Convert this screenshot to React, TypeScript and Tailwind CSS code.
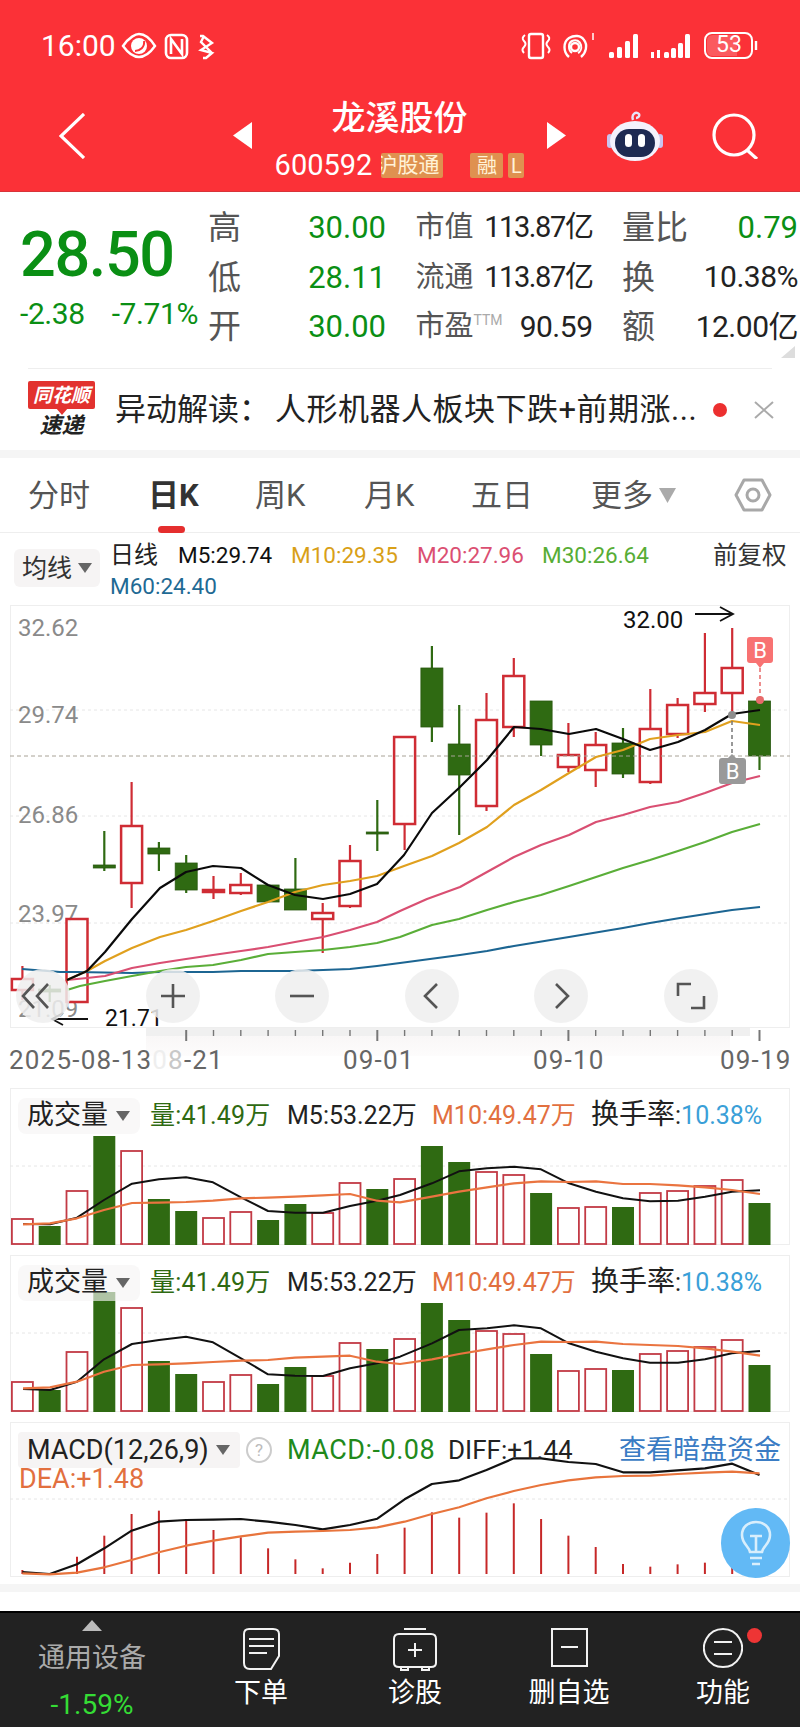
import React from "react";

const X = (i: number) => 22.4 + 27.3 * i;
const RED = "#cf2c34";
const GREEN = "#2f6a12";

type C = [string, number, number, number, number];
const candles: C[] = [
  ["r", 966, 979, 990, 1000],
  ["g", 985, 989, 992, 1002],
  ["r", 919, 919, 1002, 1002],
  ["g", 831, 865, 868, 871],
  ["r", 782, 826, 883, 908],
  ["g", 842, 848, 854, 871],
  ["g", 855, 863, 890, 893],
  ["r", 876, 890, 892, 899],
  ["r", 873, 885, 893, 895],
  ["g", 885, 885, 902, 902],
  ["g", 858, 889, 910, 910],
  ["r", 903, 913, 919, 953],
  ["r", 845, 861, 906, 908],
  ["g", 800, 832, 834, 851],
  ["r", 737, 737, 824, 850],
  ["g", 646, 668, 727, 742],
  ["g", 705, 744, 775, 835],
  ["r", 693, 720, 806, 811],
  ["r", 658, 676, 727, 737],
  ["g", 701, 701, 745, 756],
  ["r", 723, 755, 767, 772],
  ["r", 732, 745, 770, 787],
  ["g", 728, 743, 774, 778],
  ["r", 689, 729, 782, 784],
  ["r", 698, 705, 734, 738],
  ["r", 633, 693, 704, 712],
  ["r", 628, 668, 693, 715],
  ["g", 701, 701, 756, 770],
];

const pts = (a: number[][]) => a.map((p) => p.join(",")).join(" ");

const m5 = [[67,980],[87,971],[105,952],[132,919],[160,888],[186,872],[213,866],[241,868],[268,885],[295,895],[323,899],[350,894],[377,884],[404,855],[432,813],[459,788],[487,760],[514,727],[541,729],[569,734],[596,729],[623,739],[650,750],[678,742],[705,730],[732,714],[760,710]];
const m10 = [[67,980],[87,971],[105,961],[132,948],[160,937],[186,930],[213,921],[241,911],[268,902],[295,892],[323,885],[350,881],[377,876],[404,866],[432,856],[459,843],[487,827],[514,805],[541,790],[569,773],[596,757],[623,750],[650,739],[678,735],[705,732],[732,721],[760,725]];
const m20 = [[67,980],[87,978],[105,976],[132,968],[160,963],[186,959],[213,955],[241,951],[268,947],[295,942],[323,937],[350,930],[377,922],[400,911],[427,899],[460,887],[487,872],[514,857],[541,845],[569,835],[596,822],[623,815],[650,807],[678,802],[705,793],[732,783],[760,776]];
const m30 = [[67,990],[80,986],[105,981],[132,976],[160,971],[186,967],[213,965],[241,960],[268,954],[295,952],[323,950],[350,947],[377,943],[400,937],[432,925],[459,919],[487,910],[514,902],[541,895],[569,886],[596,877],[623,868],[650,860],[678,851],[705,842],[732,832],[760,824]];
const m60 = [[22,969],[60,972],[77,972],[132,973],[160,972],[213,972],[241,971],[295,971],[323,970],[350,969],[377,966],[400,963],[460,955],[487,951],[514,946],[569,937],[623,928],[650,923],[680,918],[732,910],[760,907]];

const vol1 = [1219,1226,1191,1136,1151,1199,1211,1218,1212,1220,1204,1213,1183,1189,1179,1146,1162,1172,1175,1193,1208,1207,1207,1193,1191,1186,1180,1203];
const vol2 = [1382,1390,1352,1292,1308,1361,1374,1382,1375,1384,1367,1376,1343,1349,1339,1303,1320,1331,1334,1354,1371,1369,1370,1354,1351,1347,1340,1365];
const isUp = [1,0,1,0,1,0,0,1,1,0,0,1,1,0,1,0,0,1,1,0,1,1,0,1,1,1,1,0];

const v = (a: number[][]) => a.map(([x, y]) => [x, +(1080 + y / 3).toFixed(1)]);
const xs1 = [23,50,77,104,132,159,186,213,241,268,295,323,350,377];
const xs2 = [400,432,459,487,514,541,569,596,623,650,678,705,732,760];
const zip = (y: number[]) => y.map((n, i) => [i < 14 ? xs1[i] : xs2[i - 14], n]);

const v1m5 = v(zip([432,433,413,360,311,298,292,307,352,393,398,398,378,362,345,310,274,265,260,268,310,335,355,364,362,350,335,331]));
const v1m10 = v(zip([433,430,415,390,369,368,366,362,355,353,350,346,342,362,367,350,335,322,310,304,306,304,312,312,316,322,330,342]));
const v2m5 = v(zip([927,930,905,838,792,780,770,787,835,883,887,888,865,850,830,790,750,745,736,745,790,815,835,848,848,838,820,813]));
const v2m10 = v(zip([925,922,905,875,855,853,850,846,842,840,833,830,827,845,852,838,822,808,795,785,786,785,792,795,798,805,815,827]));

const mTop = [450,460,410,347,282,272,303,330,352,385,418,445,428,402,323,277,293,278,250,297,347,381,432,440,433,428,415,460];
const mDiff = [456,462,433,385,332,305,300,299,297,305,315,328,315,296,238,192,181,150,115,115,126,132,157,157,151,145,131,165];
const mDea = [460,463,458,442,420,397,377,362,349,338,335,333,330,322,305,282,262,235,213,195,181,172,168,167,162,158,155,160];
const mp = (a: number[]) => a.map((n, i) => [X(i), +(1420 + n / 3).toFixed(1)]);

function Candles() {
  return (
    <g>
      {candles.map(([c, hi, t, b, lo], i) => {
        const x = X(i);
        const col = c === "r" ? RED : GREEN;
        return (
          <g key={i}>
            <line x1={x} x2={x} y1={hi} y2={t} stroke={col} strokeWidth={2.2} />
            <line x1={x} x2={x} y1={b} y2={lo} stroke={col} strokeWidth={2.2} />
            {c === "r" ? (
              <rect x={x - 10.5} y={t} width={21} height={b - t} fill="#fff" fillOpacity={0.9} stroke={col} strokeWidth={2.5} />
            ) : (
              <rect x={x - 11} y={t} width={22} height={b - t} fill={col} stroke="#28590f" strokeWidth={0.8} />
            )}
          </g>
        );
      })}
    </g>
  );
}

function Line({ p, c, w = 2.2 }: { p: number[][]; c: string; w?: number }) {
  return <polyline points={pts(p)} fill="none" stroke={c} strokeWidth={w} strokeLinejoin="round" />;
}

function Dotted({ y }: { y: number }) {
  return <line x1={10} x2={790} y1={y} y2={y} stroke="#e6e6e6" strokeWidth={1} strokeDasharray="3 3" />;
}

function Caret({ className = "" }: { className?: string }) {
  return (
    <svg width="14" height="10" viewBox="0 0 14 10" className={className}>
      <path d="M0 0H14L7 10Z" fill="#666" />
    </svg>
  );
}

function KChart() {
  const labels: [string, number][] = [["32.62", 636], ["29.74", 723], ["26.86", 823], ["23.97", 922], ["21.09", 1017]];
  return (
    <div className="relative ml-[10px] h-[423px] w-[780px] ring-1 ring-inset ring-[#eee]">
      <svg width="780" height="423" viewBox="10 605 780 423" className="block">
        <Dotted y={710} />
        <Dotted y={816} />
        <Dotted y={923} />
        {labels.map(([t, y]) => (
          <text key={t} x={18} y={y} className="fill-[#8a8a8a] text-[24px]">{t}</text>
        ))}
        <Candles />
        <line x1={10} x2={790} y1={756} y2={756} stroke="#a8a296" strokeWidth={1} strokeDasharray="4 3" />
        <Line p={m60} c="#1c6592" />
        <Line p={m30} c="#5aae38" />
        <Line p={m20} c="#d94f72" />
        <Line p={m10} c="#e0a01e" />
        <Line p={m5} c="#0a0a0a" />
        <text x={623} y={628} className="fill-[#111] text-[24px]">32.00</text>
        <path d="M695 614H732M720 607L733 614L720 621" fill="none" stroke="#111" strokeWidth={1.8} />
        <text x={105} y={1026} className="fill-[#111] text-[23px]">21.71</text>
        <path d="M88 1019H53M63 1013L52 1019L63 1025" fill="none" stroke="#111" strokeWidth={1.8} />
        <line x1={760} x2={760} y1={668} y2={699} stroke="#e86a6a" strokeWidth={1.5} strokeDasharray="4 3" />
        <circle cx={760} cy={700} r={4} fill="#e86a6a" />
        <path d="M750 637H770Q773 637 773 640V660Q773 663 770 663H764L760 668L756 663H750Q747 663 747 660V640Q747 637 750 637Z" fill="#f87272" />
        <text x={760} y={658} textAnchor="middle" className="fill-white text-[22px]">B</text>
        <line x1={732} x2={732} y1={714} y2={754} stroke="#777" strokeWidth={1.5} strokeDasharray="4 3" />
        <circle cx={732} cy={715} r={4} fill="#8d8d8d" />
        <path d="M722 758H728L732 754L736 758H743Q746 758 746 761V781Q746 784 743 784H722Q719 784 719 781V761Q719 758 722 758Z" fill="#999" />
        <text x={732.5} y={779} textAnchor="middle" className="fill-white text-[22px]">B</text>
      </svg>
      <div className="absolute bottom-[5px] left-[6px] flex w-[702px] justify-between">
        {[
          <path key="a" d="M18 15L7 27L18 39M32 15L21 27L32 39" />,
          <path key="b" d="M15 27H39M27 15V39" />,
          <path key="c" d="M15 27H39" />,
          <path key="d" d="M32 15L20 27L32 39" />,
          <path key="e" d="M22 15L34 27L22 39" />,
          <path key="f" d="M14 27V15H27M40 27V39H27" />,
        ].map((icon, i) => (
          <div key={i} className="h-[54px] w-[54px] rounded-full bg-[#eeeeee]/85">
            <svg width="54" height="54" viewBox="0 0 54 54" fill="none" stroke="#555" strokeWidth={2.6}>
              {icon}
            </svg>
          </div>
        ))}
      </div>
    </div>
  );
}

function Axis() {
  const major = [6, 13, 20, 27];
  return (
    <div className="relative h-[60px]">
      <div className="absolute left-[146px] right-[50px] top-0 h-[8px] bg-[#f0f0f0]" />
      <div className="absolute left-[146px] right-[70px] top-[8px] h-[20px] bg-linear-to-b from-[#f9f7f7] to-[#fdfcfc]" />
      <svg width="800" height="14" viewBox="0 0 800 14" className="relative block">
        {Array.from({ length: 22 }).map((_, k) => {
          const i = k + 6;
          const big = major.includes(i);
          return <line key={i} x1={X(i)} x2={X(i)} y1={2} y2={big ? 13 : 8} stroke="#777" strokeWidth={big ? 2 : 1.4} />;
        })}
      </svg>
      <div className="relative flex h-[36px] items-center pl-[9px] text-[26px] tracking-[1.2px] text-[#666]">
        <div className="w-[334px] whitespace-nowrap">
          <span>2025-08-13</span>
          <span className="text-[#eeeeee]">0</span>
          <span className="text-[#c8c8c8]">8</span>
          <span>-21</span>
        </div>
        <div className="w-[190px]">09-01</div>
        <div className="w-[187px]">09-10</div>
        <div>09-19</div>
      </div>
    </div>
  );
}

function VolumePanel({ top, tops, a, b, dot }: { top: number; tops: number[]; a: number[][]; b: number[][]; dot: number }) {
  const bottom = top + 157;
  return (
    <div className="relative ml-[10px] h-[157px] w-[780px] ring-1 ring-inset ring-[#eee]">
      <svg width="780" height="157" viewBox={`10 ${top} 780 157`} className="block">
        <Dotted y={dot} />
        {tops.map((t, i) =>
          isUp[i] ? (
            <rect key={i} x={X(i) - 10.5} y={t} width={21} height={bottom - t - 1} fill="#fff" stroke="#c23a45" strokeWidth={1.8} />
          ) : (
            <rect key={i} x={X(i) - 11} y={t} width={22} height={bottom - t} fill={GREEN} />
          )
        )}
        <Line p={a} c="#111" w={2} />
        <Line p={b} c="#ea7440" w={2.2} />
      </svg>
      <div className="absolute left-[8px] top-[9px] flex items-center text-[25px]">
        <div className="mr-[10px] flex h-[36px] w-[122px] items-center gap-[8px] rounded-[8px] bg-[#f6f4f4]/65 pl-[9px] text-[27px] leading-none text-[#222]">
          成交量<Caret />
        </div>
        <span className="w-[137px] tracking-[0.2px] text-[#2f6a12]">量:41.49万</span>
        <span className="w-[145px] text-[#222]">M5:53.22万</span>
        <span className="w-[159px] text-[#e2703f]">M10:49.47万</span>
        <span className="whitespace-nowrap text-[#222]"><span className="text-[28px] leading-none">换手率</span>:<span className="text-[#3a9fd8]">10.38%</span></span>
      </div>
    </div>
  );
}

function MacdPanel() {
  return (
    <div className="relative ml-[10px] h-[155px] w-[780px] ring-1 ring-inset ring-[#eee]">
      <svg width="780" height="155" viewBox="10 1422 780 155" className="block">
        <Dotted y={1499} />
        {mTop.map((t, i) => (
          <line key={i} x1={X(i)} x2={X(i)} y1={1420 + t / 3} y2={1574} stroke="#c62828" strokeWidth={2} />
        ))}
        <Line p={mp(mDiff)} c="#111" />
        <Line p={mp(mDea)} c="#e8743c" />
      </svg>
      <div className="absolute left-[8px] top-[8px] flex items-center text-[25px]">
        <div className="flex h-[36px] w-[222px] items-center gap-[7px] rounded-[4px] bg-[#f6f4f4] pl-[9px] text-[27px] leading-none whitespace-nowrap text-[#222]">
          MACD(12,26,9)<Caret />
        </div>
        <div className="ml-[6px] flex h-[26px] w-[26px] items-center justify-center rounded-full border-2 border-[#ccc] text-[17px] text-[#bbb]">?</div>
        <span className="ml-[15px] w-[161px] text-[27px] tracking-[0.5px] whitespace-nowrap text-[#218a1b]">MACD:-0.08</span>
        <span className="w-[171px] text-[26px] text-[#222]">DIFF:+1.44</span>
        <span className="text-[27px] whitespace-nowrap text-[#3a7cc4]">查看暗盘资金</span>
      </div>
      <div className="absolute left-[9px] top-[41px] text-[27px] leading-[32px] text-[#e2703f]">DEA:+1.48</div>
      <div className="absolute right-0 top-[86px] flex h-[70px] w-[69px] items-center justify-center rounded-full bg-[#62b9f5]">
        <svg width="34" height="46" viewBox="0 0 34 46" fill="none" stroke="#d8eefc" strokeWidth={2.6}>
          <path d="M11 32C10 26 3 24 3 15C3 7 9 2 17 2S31 7 31 15C31 24 24 26 23 32Z" />
          <path d="M11 16H23M17 16V32M11 38H23M13 44H21" />
        </svg>
      </div>
    </div>
  );
}

function StatusIcons() {
  return (
    <svg width="780" height="34" viewBox="20 29 780 34" className="absolute left-[20px] top-[29px]" fill="none" stroke="#fff">
      <path d="M123 46C129 37 136 34 139 34C144 34 150 38 155 46C150 53 144 57 139 57C134 57 128 53 123 46Z" strokeWidth={2.4} />
      <circle cx={139} cy={46} r={8} fill="#fff" stroke="none" />
      <path d="M135 51C140 51 145 47 144 41" stroke="#fb3137" strokeWidth={2} />
      <rect x={166} y={35} width={21} height={23} rx={5} strokeWidth={2.6} />
      <path d="M171 54V39L182 54V39" strokeWidth={2.6} />
      <path d="M200 36H203L212 43L201 50L212 53L206 58H203M204 36L201 42L212 53" strokeWidth={2.4} />
      <rect x={529} y={34} width={14} height={24} rx={2} strokeWidth={2.4} />
      <path d="M525 35Q521 38 524 41T524 47T524 53M547 35Q551 38 548 41T548 47T548 53" strokeWidth={2} />
      <circle cx={575} cy={47} r={4} strokeWidth={2.4} />
      <path d="M569 57C563 52 563 42 569 38C574 35 581 35 584 40C588 45 586 53 581 57" strokeWidth={2.4} />
      <path d="M572 53C568 50 568 43 572 41C576 39 580 41 581 45C582 49 580 52 578 53" strokeWidth={2} />
      <path d="M593 33V40" strokeWidth={1.5} />
      <g fill="#fff" stroke="none">
        {[[609, 52], [617, 47], [625, 41], [633, 37]].map(([x, y]) => <rect key={x} x={x} y={y} width={5} height={58 - y} rx={1.5} />)}
        <rect x={633} y={34} width={5} height={24} rx={1.5} />
        {[[664, 52], [671, 48], [678, 43], [685, 38]].map(([x, y]) => <rect key={x} x={x} y={y} width={5} height={58 - y} rx={1.5} />)}
        <rect x={651} y={52} width={3} height={6} />
        <rect x={657} y={50} width={3} height={8} />
        <rect x={685} y={34} width={5} height={24} rx={1.5} />
      </g>
      <rect x={705} y={33} width={47} height={25} rx={7} strokeWidth={2} />
      <path d="M707 41Q707 35 713 35H737V56H713Q707 56 707 50Z" fill="#fff" fillOpacity={0.2} stroke="none" />
      <path d="M756 41V50" strokeWidth={2.4} />
    </svg>
  );
}

function Header() {
  return (
    <header className="relative h-[192px] border-b border-[#d8333a] bg-[#fb3137] text-white">
      <div className="flex h-[92px] items-center">
        <span className="ml-[41px] text-[30px] leading-none">16:00</span>
      </div>
      <StatusIcons />
      <span className="absolute left-[716px] top-[29px] text-[23px] leading-[32px] text-white">53</span>
      <div className="flex h-[99px] items-center pb-[12px] pl-[59px]">
        <svg width="26" height="46" viewBox="0 0 26 46" fill="none" stroke="#fff" strokeWidth={3.2}>
          <path d="M25 1L2 23L25 45" />
        </svg>
        <svg width="19" height="27" viewBox="0 0 19 27" className="ml-[148px]"><path d="M0 13.5L19 0V27Z" fill="#fff" /></svg>
        <div className="flex w-[295px] flex-col items-center pt-[10px]">
          <div className="text-[34px] leading-[50px] font-medium">龙溪股份</div>
          <div className="flex h-[46px] items-center leading-none">
            <span className="text-[29px]">600592</span>
            <span className="ml-[9px] flex h-[25px] w-[62px] items-center justify-end overflow-hidden rounded-[2px] bg-[#df9150] pr-[4px] text-[21px] whitespace-nowrap text-[#fff3d8]">沪股通</span>
            <span className="ml-[27px] flex h-[25px] w-[33px] items-center justify-center rounded-[2px] bg-[#df9150] text-[20px] text-[#fff3d8]">融</span>
            <span className="ml-[5px] flex h-[25px] w-[16px] items-center justify-center rounded-[2px] bg-[#df9150] text-[20px] text-[#fff3d8]">L</span>
          </div>
        </div>
        <svg width="19" height="27" viewBox="0 0 19 27"><path d="M19 13.5L0 0V27Z" fill="#fff" /></svg>
        <svg width="58" height="52" viewBox="0 0 58 52" className="ml-[41px]">
          <path d="M26 10C24 4 29 1 32 4C33 6 31 8 29 8" fill="none" stroke="#e8e4f8" strokeWidth={2.4} />
          <rect x={0} y={24} width={6} height={14} rx={3} fill="#c9c4ee" />
          <rect x={50} y={24} width={6} height={14} rx={3} fill="#c9c4ee" />
          <ellipse cx={28} cy={31} rx={25} ry={20} fill="#f4f2fd" />
          <rect x={8} y={19} width={40} height={28} rx={14} fill="#1e2a52" />
          <rect x={18} y={24} width={7} height={13} rx={3.5} fill="#fff" />
          <rect x={31} y={24} width={7} height={13} rx={3.5} fill="#fff" />
        </svg>
        <svg width="48" height="46" viewBox="0 0 48 46" fill="none" stroke="#fff" strokeWidth={3.2} className="ml-[47px]">
          <circle cx={22} cy={22} r={20} />
          <path d="M35 37L45 46" />
        </svg>
      </div>
    </header>
  );
}

function Row({ l, v, lc = "text-[33px] text-[#555]", vc = "text-[31px] text-[#222]" }: { l: React.ReactNode; v: string; lc?: string; vc?: string }) {
  return (
    <div className="flex items-center justify-between whitespace-nowrap">
      <span className={`leading-none ${lc}`}>{l}</span>
      <span className={`leading-none ${vc}`}>{v}</span>
    </div>
  );
}

function Quote() {
  const G = "text-[31px] text-[#0a8f14]";
  const s = "text-[29px] text-[#555]";
  const n = "text-[29px] tracking-[-1.4px] text-[#222]";
  const w = "text-[30px] tracking-[-0.5px] text-[#222]";
  return (
    <section className="relative h-[177px]">
      <div className="flex pt-[11px]">
        <div className="w-[208px] pl-[20px] text-[#0a8f14]">
          <div className="pt-[19px] text-[63px] leading-[66px] font-medium tracking-[-1.4px]">28.50</div>
          <div className="mt-[6px] flex w-[178px] justify-between text-[30px] leading-[40px] tracking-[-0.4px] whitespace-nowrap">
            <span>-2.38</span>
            <span>-7.71%</span>
          </div>
        </div>
        <div className="grid w-[590px] grid-cols-[178px_177px_176px] gap-x-[29.5px] gap-y-0 [grid-auto-rows:49.5px] items-center">
          <Row l="高" v="30.00" vc={G} />
          <Row l="市值" v="113.87亿" lc={s} vc={n} />
          <Row l="量比" v="0.79" vc={G} />
          <Row l="低" v="28.11" vc={G} />
          <Row l="流通" v="113.87亿" lc={s} vc={n} />
          <Row l="换" v="10.38%" vc={w} />
          <Row l="开" v="30.00" vc={G} />
          <Row l={<>市盈<span className="align-super text-[14px] text-[#aaa]">TTM</span></>} v="90.59" lc={s} vc="text-[30px] tracking-[-0.5px] text-[#222]" />
          <Row l="额" v="12.00亿" vc={w} />
        </div>
      </div>
      <svg width="14" height="12" viewBox="0 0 14 12" className="absolute right-[5px] top-[154px]"><path d="M14 0V12H0Z" fill="#ddd" /></svg>
      <div className="absolute bottom-0 left-[28px] h-px w-[744px] bg-[#eee]" />
    </section>
  );
}

function News() {
  return (
    <section className="flex h-[81px] items-center pl-[28px]">
      <div className="flex w-[67px] flex-col items-center">
        <div className="relative flex h-[28px] w-[67px] items-center justify-center rounded-[2px] bg-[#e2322f] text-[19px] leading-none font-bold text-white italic">
          同花顺
          <span className="absolute -bottom-[6px] left-[28px] h-0 w-0 border-x-[6px] border-t-[7px] border-x-transparent border-t-[#e2322f]" />
        </div>
        <div className="mt-[5px] text-[22px] leading-[24px] font-bold text-[#222] italic">速递</div>
      </div>
      <div className="ml-[20px] w-[598px] shrink-0 text-[31px] leading-none whitespace-nowrap text-[#222]">
        异动解读：<span className="ml-[5px] tracking-[0.5px]">人形机器人板块下跌+前期涨...</span>
      </div>
      <span className="h-[14px] w-[14px] shrink-0 rounded-full bg-[#ec2f2f]" />
      <svg width="20" height="18" viewBox="0 0 20 18" className="ml-[27px]" fill="none" stroke="#aaa" strokeWidth={2}><path d="M1 1L19 17M19 1L1 17" /></svg>
    </section>
  );
}

function Tabs() {
  const t: [string, string][] = [["分时", "w-[120px]"], ["日K", "w-[107px]"], ["周K", "w-[109px]"], ["月K", "w-[107px]"], ["五日", "w-[120px]"]];
  return (
    <nav className="flex h-[75px] items-center border-b border-[#eee] pl-[28px] text-[31px] leading-none text-[#555]">
      {t.map(([s, w]) => (
        <div key={s} className={`relative flex h-full items-center ${w} ${s === "日K" ? "font-bold text-[#333]" : ""}`}>
          {s}
          {s === "日K" && <span className="absolute bottom-[-1px] left-[10px] h-[7px] w-[27px] rounded-full bg-[#e52e2e]" />}
        </div>
      ))}
      <span>更多</span>
      <svg width="17" height="15" viewBox="0 0 17 15" className="ml-[6px]"><path d="M0 0H17L8.5 15Z" fill="#aaa" /></svg>
      <svg width="38" height="34" viewBox="0 0 38 34" fill="none" stroke="#a8a8a8" className="ml-[58px]" strokeWidth={3}>
        <path d="M10 2H28L36 17L28 32H10L2 17Z" strokeLinejoin="round" />
        <circle cx={19} cy={17} r={6} />
      </svg>
    </nav>
  );
}

function MaLegend() {
  return (
    <section className="flex h-[72px] pl-[14px]">
      <div className="mt-[16px] flex h-[38px] w-[86px] items-center gap-[6px] rounded-[6px] bg-[#f6f4f4] pl-[8px] text-[25px] leading-none text-[#333]">
        均线<Caret />
      </div>
      <div className="ml-[10px] w-[690px] pt-[7px] text-[22.5px] leading-[31px] whitespace-nowrap">
        <div className="flex">
          <span className="w-[68px] text-[24px] text-[#222]">日线</span>
          <span className="w-[113px] text-[#111]">M5:29.74</span>
          <span className="w-[126px] text-[#d9a017]">M10:29.35</span>
          <span className="w-[125px] text-[#db4f72]">M20:27.96</span>
          <span className="w-[171px] text-[#57ad35]">M30:26.64</span>
          <span className="text-[24.5px] text-[#333]">前复权</span>
        </div>
        <div className="text-[#1f6a94]">M60:24.40</div>
      </div>
    </section>
  );
}

function BottomBar() {
  const items: [string, number, React.ReactNode][] = [
    ["下单", 37, <path key="1" d="M6 1H30Q36 1 36 6V28L28 41H7Q1 41 1 35V6Q1 1 6 1ZM6 11H31M6 18H31M6 25H24" />],
    ["诊股", 44, <path key="2" d="M11 1H33M6 6H38Q43 6 43 11V35Q43 39 38 39H6Q1 39 1 35V11Q1 6 6 6ZM22 15V29M15 22H29M8 39V42H15V39M29 39V42H36V39" />],
    ["删自选", 37, <path key="3" d="M1 1H36V38H1ZM10 19H27" />],
    ["功能", 40, <path key="4" d="M20 1A19 19 0 1 0 20.01 1ZM11 14H29M11 26H29" />],
  ];
  return (
    <footer className="grid h-[116px] grid-cols-[184px_repeat(4,154px)] border-t-2 border-[#000] bg-[#222]">
      <div className="flex flex-col items-center pt-[7px]">
        <svg width="20" height="11" viewBox="0 0 20 11"><path d="M10 0L20 11H0Z" fill="#bbb" /></svg>
        <div className="mt-[12px] text-[27px] leading-[30px] text-[#aaa]">通用设备</div>
        <div className="mt-[17px] text-[28px] leading-[30px] text-[#35dc35]">-1.59%</div>
      </div>
      {items.map(([t, w, d], i) => (
        <div key={t} className="relative flex flex-col items-center pt-[15px]">
          <svg width={w} height="43" viewBox={`0 0 ${w} 43`} fill="none" stroke="#f2f2f2" strokeWidth={2}>{d}</svg>
          <div className="mt-[5px] text-[27px] leading-[34px] text-white">{t}</div>
          {i === 3 && <span className="absolute left-[101px] top-[15px] h-[15px] w-[15px] rounded-full bg-[#ee3535]" />}
        </div>
      ))}
    </footer>
  );
}

export default function App() {
  return (
    <div className="h-[1727px] w-[800px] overflow-hidden bg-white font-[Roboto,'Noto_Sans_CJK_SC',sans-serif]">
      <Header />
      <Quote />
      <News />
      <div className="h-[8px] bg-[#f5f5f5]" />
      <Tabs />
      <MaLegend />
      <KChart />
      <Axis />
      <VolumePanel top={1088} tops={vol1} a={v1m5} b={v1m10} dot={1166} />
      <div className="h-[10px]" />
      <VolumePanel top={1255} tops={vol2} a={v2m5} b={v2m10} dot={1333} />
      <div className="h-[10px]" />
      <MacdPanel />
      <div className="h-[7px]" />
      <div className="h-[8px] bg-[#f5f5f5]" />
      <div className="h-[19px]" />
      <BottomBar />
    </div>
  );
}
